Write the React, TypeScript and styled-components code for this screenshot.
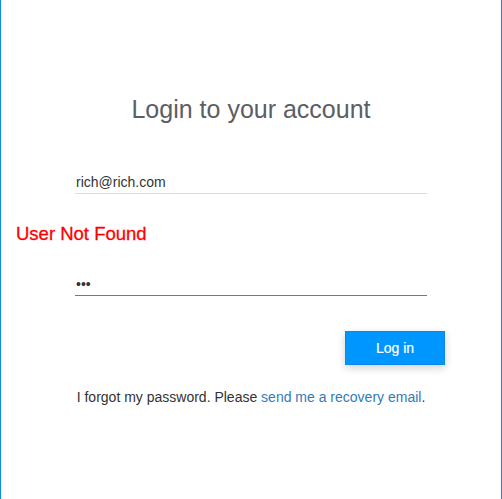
import React from "react";
import styled, { createGlobalStyle } from "styled-components";

const Global = createGlobalStyle`
  html, body { margin: 0; padding: 0; background: #fff; }
  body { font-family: "Liberation Sans", Arial, Helvetica, sans-serif; }
  * { box-sizing: border-box; }
`;

const Page = styled.div`
  width: 502px;
  height: 499px;
  border-left: 1px solid #0a8fe8;
  border-right: 1px solid #0a8fe8;
  padding-top: 94px;
  display: flex;
  flex-direction: column;
  align-items: center;
  background: #fff;
`;

const Title = styled.h1`
  margin: 0;
  font-size: 25px;
  line-height: 30px;
  font-weight: 400;
  color: #5b5e63;
`;

const Field = styled.input<{ $focused?: boolean }>`
  display: block;
  width: 352px;
  height: 24px;
  margin-top: ${(p) => (p.$focused ? "28px" : "46px")};
  padding: 0 1px;
  border: none;
  border-bottom: 1px solid ${(p) => (p.$focused ? "#1e8fe6" : "#dcdcdc")};
  outline: none;
  font-family: "Liberation Sans", Arial, sans-serif;
  font-size: 14px;
  color: #333;
  background: transparent;
`;

const ErrorRow = styled.div`
  align-self: stretch;
  margin-top: 29px;
  padding-left: 15px;
  font-size: 18.5px;
  line-height: 21px;
  color: #ff0000;
  -webkit-text-stroke: 0.3px #ff0000;
`;

const ButtonRow = styled.div`
  width: 352px;
  display: flex;
  justify-content: flex-end;
  margin-top: 35px;
`;

const LoginButton = styled.button`
  width: 100px;
  height: 34px;
  margin-right: -18px;
  background: #0096ff;
  border: 1px solid #0a86f0;
  color: #fff;
  font-family: "Liberation Sans", Arial, sans-serif;
  font-size: 14px;
  -webkit-text-stroke: 0.2px #fff;
  box-shadow: 0 3px 8px rgba(0, 0, 0, 0.18);
  cursor: pointer;
`;

const Forgot = styled.p`
  margin: 22px 0 0;
  font-size: 14px;
  line-height: 20px;
  color: #333;
  text-align: center;
`;

const Link = styled.a`
  color: #337ab7;
  text-decoration: none;
`;

export default function App() {
  return (
    <>
      <Global />
      <Page>
        <Title>Login to your account</Title>
        <Field type="email" defaultValue="rich@rich.com" />
        <ErrorRow>User Not Found</ErrorRow>
        <Field type="password" defaultValue="abc" $focused />
        <ButtonRow>
          <LoginButton>Log in</LoginButton>
        </ButtonRow>
        <Forgot>
          I forgot my password. Please <Link href="#">send me a recovery email</Link>.
        </Forgot>
      </Page>
    </>
  );
}
